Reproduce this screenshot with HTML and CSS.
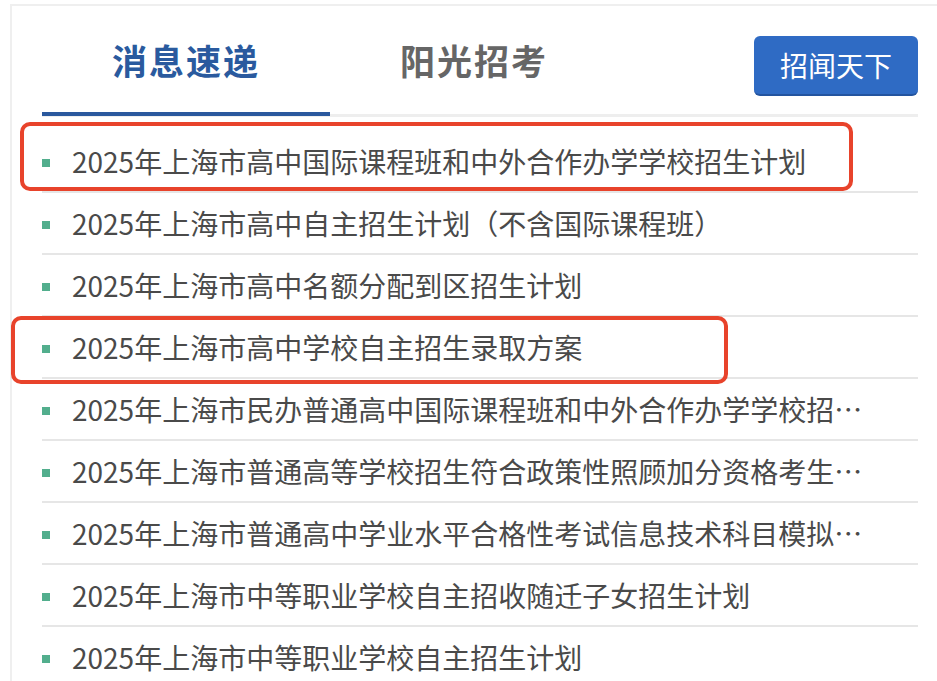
FILE: index.html
```html
<!DOCTYPE html>
<html lang="zh-CN">
<head>
<meta charset="utf-8">
<title>消息速递</title>
<link rel="stylesheet" href="styles.css">
</head>
<body>
<div class="page">
  <div class="panel">
    <div class="header">
      <div class="tab tab-active">消息速递</div>
      <div class="tab">阳光招考</div>
      <a class="more-btn" href="#">招闻天下</a>
    </div>
    <ul class="news">
      <li class="news-item"><span class="dot"></span><span class="title">2025年上海市高中国际课程班和中外合作办学学校招生计划</span></li>
      <li class="news-item"><span class="dot"></span><span class="title">2025年上海市高中自主招生计划（不含国际课程班）</span></li>
      <li class="news-item"><span class="dot"></span><span class="title">2025年上海市高中名额分配到区招生计划</span></li>
      <li class="news-item"><span class="dot"></span><span class="title">2025年上海市高中学校自主招生录取方案</span></li>
      <li class="news-item"><span class="dot"></span><span class="title">2025年上海市民办普通高中国际课程班和中外合作办学学校招生计划</span></li>
      <li class="news-item"><span class="dot"></span><span class="title">2025年上海市普通高等学校招生符合政策性照顾加分资格考生名单公示</span></li>
      <li class="news-item"><span class="dot"></span><span class="title">2025年上海市普通高中学业水平合格性考试信息技术科目模拟练习</span></li>
      <li class="news-item"><span class="dot"></span><span class="title">2025年上海市中等职业学校自主招收随迁子女招生计划</span></li>
      <li class="news-item"><span class="dot"></span><span class="title">2025年上海市中等职业学校自主招生计划</span></li>
    </ul>
  </div>
  <div class="mark mark-1"></div>
  <div class="mark mark-2"></div>
</div>
</body>
</html>
```

FILE: styles.css
```css
html, body {
  margin: 0;
  padding: 0;
  background: #ffffff;
  overflow: hidden;
}

body {
  font-family: "Noto Sans CJK SC", "Noto Sans", sans-serif;
  width: 937px;
  height: 681px;
}

.page {
  position: relative;
  width: 937px;
  height: 681px;
  overflow: hidden;
}

.panel {
  margin: 4px 0 0 10px;
  width: 876px;
  padding: 0 30px 0 30px;
  border-top: 2px solid #efefef;
  border-left: 2px solid #efefef;
  background: #ffffff;
}

.header {
  display: flex;
  align-items: flex-start;
  height: 108px;
  border-bottom: 3px solid #eeeeee;
}

.tab {
  box-sizing: border-box;
  width: 288px;
  height: 110px;
  margin-bottom: -2px;
  padding-top: 32px;
  text-align: center;
  font-size: 35px;
  line-height: 44px;
  font-weight: 700;
  letter-spacing: 2px;
  color: #666666;
}

.tab-active {
  color: #2a5a9e;
  border-bottom: 4px solid #2a589d;
}

.more-btn {
  margin-left: auto;
  margin-top: 30px;
  box-sizing: border-box;
  width: 164px;
  height: 60px;
  display: flex;
  align-items: center;
  justify-content: center;
  background: #2f6bc4;
  border-bottom: 2px solid #23549f;
  border-radius: 6px;
  color: #ffffff;
  font-size: 28px;
  text-decoration: none;
}

.news {
  list-style: none;
  margin: 14px 0 0 0;
  padding: 0;
}

.news-item {
  display: flex;
  align-items: center;
  height: 60px;
  padding-right: 48px;
  border-bottom: 2px solid #e6e6e6;
}

.dot {
  flex: none;
  width: 8px;
  height: 8px;
  margin: 4px 22px 0 0;
  background: #52ae8d;
}

.title {
  flex: 1;
  min-width: 0;
  white-space: nowrap;
  overflow: hidden;
  text-overflow: ellipsis;
  font-size: 28px;
  line-height: 60px;
  color: #4a4a4a;
}

.mark {
  position: absolute;
  box-sizing: border-box;
  border: 4px solid #e8432b;
  border-radius: 10px;
}

.mark-1 {
  left: 20px;
  top: 122px;
  width: 833px;
  height: 69px;
}

.mark-2 {
  left: 11px;
  top: 316px;
  width: 717px;
  height: 68px;
}
```
